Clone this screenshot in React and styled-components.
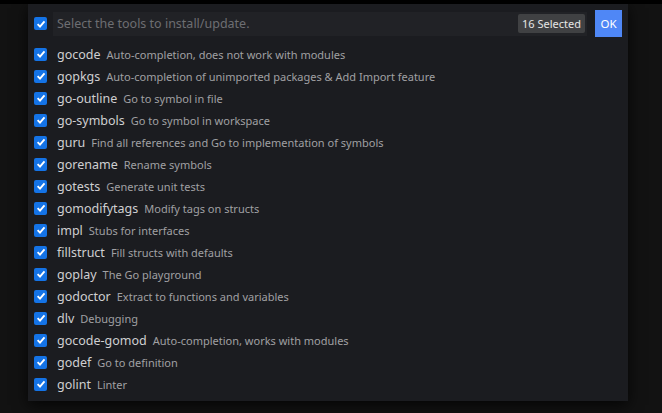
import React from "react";
import styled, { createGlobalStyle } from "styled-components";

const GlobalStyle = createGlobalStyle`
  html, body {
    margin: 0;
    padding: 0;
    background: #121212;
    font-family: "Noto Sans", "Open Sans", sans-serif;
  }
`;

const Page = styled.div`
  width: 662px;
  height: 413px;
  overflow: hidden;
  background: #121212;
  border-top: 4px solid #000;
  box-sizing: border-box;
`;

const Panel = styled.div`
  margin-left: 28px;
  width: 600px;
  height: 397px;
  background: #1b1c20;
  box-shadow: 0 4px 14px rgba(0, 0, 0, 0.75);
  padding: 6px 6px 0 6px;
  box-sizing: border-box;
`;

const Header = styled.div`
  display: flex;
  align-items: center;
  height: 27px;
`;

const Input = styled.div`
  flex: 1;
  height: 24px;
  margin-left: 6px;
  background: #212226;
  display: flex;
  align-items: center;
  padding: 0 2px 0 4px;
  box-sizing: border-box;
`;

const Placeholder = styled.span`
  flex: 1;
  font-size: 12.5px;
  color: #6d6e72;
`;

const Badge = styled.span`
  background: #404143;
  color: #e6e6e6;
  font-size: 11px;
  line-height: 19px;
  padding: 0 4px;
  border-radius: 2px;
`;

const OkButton = styled.button`
  margin-left: 8px;
  width: 27px;
  height: 27px;
  border: none;
  padding: 0;
  background: #4f87f6;
  color: #fff;
  font-family: inherit;
  font-size: 11.5px;
`;

const List = styled.div`
  margin-top: 6px;
  display: flex;
  flex-direction: column;
`;

const Row = styled.div`
  display: flex;
  align-items: center;
  height: 22px;
`;

const Box = styled.span`
  width: 13px;
  height: 13px;
  border-radius: 2px;
  background: #1473e6;
  display: inline-flex;
  align-items: center;
  justify-content: center;
  flex-shrink: 0;
`;

const Label = styled.span`
  margin-left: 10px;
  font-size: 12.5px;
  color: #cfcfd1;
`;

const Desc = styled.span`
  margin-left: 6px;
  font-size: 11px;
  color: #a0a0a3;
`;

const Check = () => (
  <Box>
    <svg width="10" height="10" viewBox="0 0 10 10">
      <path d="M1.6 5.2 L4 7.6 L8.5 2.4" fill="none" stroke="#fff" strokeWidth="1.9" />
    </svg>
  </Box>
);

const tools = [
  ["gocode", "Auto-completion, does not work with modules"],
  ["gopkgs", "Auto-completion of unimported packages & Add Import feature"],
  ["go-outline", "Go to symbol in file"],
  ["go-symbols", "Go to symbol in workspace"],
  ["guru", "Find all references and Go to implementation of symbols"],
  ["gorename", "Rename symbols"],
  ["gotests", "Generate unit tests"],
  ["gomodifytags", "Modify tags on structs"],
  ["impl", "Stubs for interfaces"],
  ["fillstruct", "Fill structs with defaults"],
  ["goplay", "The Go playground"],
  ["godoctor", "Extract to functions and variables"],
  ["dlv", "Debugging"],
  ["gocode-gomod", "Auto-completion, works with modules"],
  ["godef", "Go to definition"],
  ["golint", "Linter"],
];

export default function App() {
  return (
    <Page>
      <GlobalStyle />
      <Panel>
        <Header>
          <Check />
          <Input>
            <Placeholder>Select the tools to install/update.</Placeholder>
            <Badge>{tools.length} Selected</Badge>
          </Input>
          <OkButton>OK</OkButton>
        </Header>
        <List>
          {tools.map(([name, desc]) => (
            <Row key={name}>
              <Check />
              <Label>{name}</Label>
              <Desc>{desc}</Desc>
            </Row>
          ))}
        </List>
      </Panel>
    </Page>
  );
}
